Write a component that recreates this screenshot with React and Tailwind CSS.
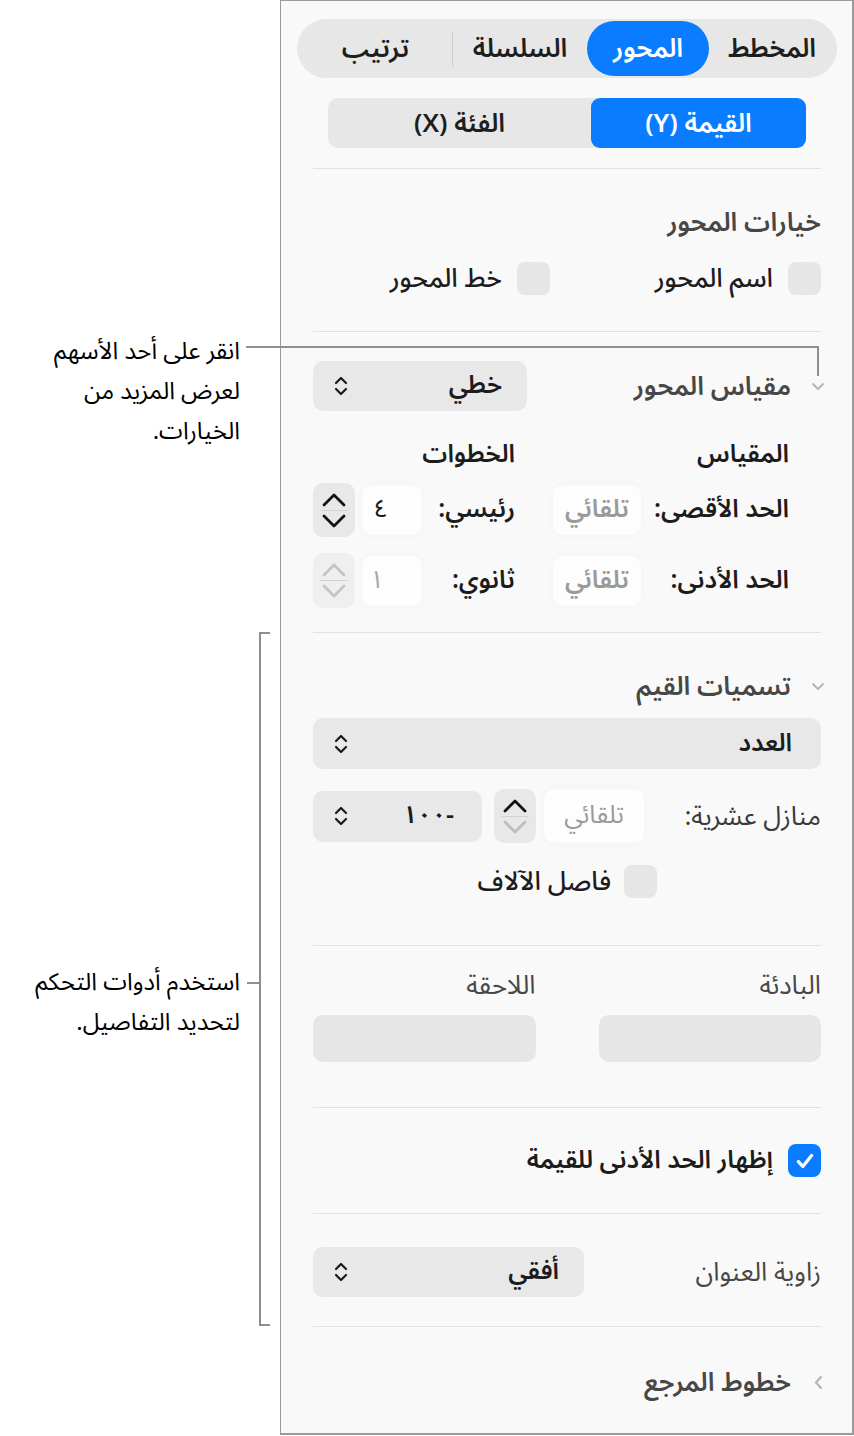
import React from 'react';

const AR = "font-['Noto_Sans_Arabic','DejaVu_Sans',sans-serif]";

const UpDown = () => (
  <svg width="16" height="22" viewBox="0 0 16 22" fill="none" stroke="#1a1a1a" strokeWidth="2.2" strokeLinecap="round" strokeLinejoin="round">
    <path d="M3 8l5-5 5 5" />
    <path d="M3 14l5 5 5-5" />
  </svg>
);

const Chev = ({ dir, color }) => (
  <svg width="26" height="15" viewBox="0 0 26 15" fill="none" stroke={color} strokeWidth="2.8" strokeLinecap="round" strokeLinejoin="round">
    {dir === 'up' ? <path d="M3 13l10-10 10 10" /> : <path d="M3 2l10 10 10-10" />}
  </svg>
);

const Stepper = ({ up = '#111', down = '#111', bg = 'bg-[#e8e8e8]', h = 'h-[54px]' }) => (
  <div className={`flex w-[42px] shrink-0 flex-col items-center justify-center rounded-[10px] ${bg} ${h}`}>
    <Chev dir="up" color={up} />
    <div className="my-[3px] h-px w-[28px] bg-[#d2d2d2]" />
    <Chev dir="down" color={down} />
  </div>
);

const Select = ({ label, className = '', textPr = 'pr-[25px]' }) => (
  <div className={`flex items-center justify-between rounded-[10px] bg-[#e8e8e8] pl-[20px] ${textPr} ${className}`}>
    <span className="text-[25px] font-semibold text-[#1c1c1c]">{label}</span>
    <UpDown />
  </div>
);

const Box = ({ checked }) =>
  checked ? (
    <div className="flex h-[33px] w-[33px] shrink-0 items-center justify-center rounded-[8px] bg-[#0a7cff]">
      <svg width="22" height="22" viewBox="0 0 20 20" fill="none" stroke="#fff" strokeWidth="3" strokeLinecap="round" strokeLinejoin="round">
        <path d="M4 10.5l4 4.5 8-10" />
      </svg>
    </div>
  ) : (
    <div className="h-[33px] w-[33px] shrink-0 rounded-[8px] bg-[#e6e6e6]" />
  );

const Field = ({ text, className = '', tone = 'text-[#9a9a9a]' }) => (
  <div className={`flex h-[50px] items-center rounded-[10px] bg-white/60 shadow-[0_0_8px_rgba(0,0,0,0.03)] ${className}`}>
    <span className={`text-[25px] ${tone}`}>{text}</span>
  </div>
);

const Divider = ({ mt }) => <div className={`h-px bg-[#e2e2e2] ${mt}`} />;

const SectionTitle = ({ text, open = true, mt }) => (
  <div className={`flex h-[30px] items-center ${mt}`}>
    <span className="-mr-[4px] ml-[20px] flex w-[14px] justify-center">
      {open ? (
        <svg width="14" height="9" viewBox="0 0 14 9" fill="none" stroke="#b4b4b4" strokeWidth="1.8" strokeLinecap="round" strokeLinejoin="round">
          <path d="M2 2l5 5 5-5" />
        </svg>
      ) : (
        <svg width="9" height="15" viewBox="0 0 9 15" fill="none" stroke="#b4b4b4" strokeWidth="2.2" strokeLinecap="round" strokeLinejoin="round">
          <path d="M7 2L2 7.5 7 13" />
        </svg>
      )}
    </span>
    <span className="text-[26px] font-semibold text-[#474747]">{text}</span>
  </div>
);

export default function App() {
  return (
    <div className={`relative flex h-[1436px] w-[854px] bg-white ${AR}`}>
      <div className="w-[280px] shrink-0" />

      <div dir="rtl" className="h-[1435px] w-[574px] border-b-2 border-l border-r-2 border-t border-[#9a9a9a] bg-[#f9f9f9] pl-[32px] pr-[31px]">
        {/* تبويبات */}
        <div className="-mx-[16px] mt-[18px] flex h-[59px] items-center rounded-full bg-[#e7e7e7] p-[2px] text-[26px] font-semibold text-[#1e1e1e]">
          <div className="flex h-full w-[126px] items-center justify-center">المخطط</div>
          <div className="flex h-full w-[122px] items-center justify-center rounded-full bg-[#0a7cff] text-white">المحور</div>
          <div className="flex h-full w-[134px] items-center justify-center">السلسلة</div>
          <div className="h-[36px] w-px bg-[#cdcdcd]" />
          <div className="flex h-full flex-1 items-center justify-center">ترتيب</div>
        </div>

        <div className="mx-[15px] mt-[20px] flex h-[50px] rounded-[10px] bg-[#e7e7e7] text-[26px] font-semibold text-[#1e1e1e]">
          <div className="flex w-[215px] items-center justify-center rounded-[9px] bg-[#0a7cff] text-white">القيمة (Y)</div>
          <div className="flex flex-1 items-center justify-center">الفئة (X)</div>
        </div>

        <Divider mt="mt-[20px]" />

        {/* خيارات المحور */}
        <div className="mt-[38px] flex h-[30px] items-center text-[26px] font-semibold text-[#474747]">خيارات المحور</div>
        <div className="mt-[25px] flex h-[33px] items-center text-[26px] font-medium text-[#1c1c1c]">
          <div className="flex w-[271px] items-center gap-[15px]">
            <Box />
            <span>اسم المحور</span>
          </div>
          <div className="flex items-center gap-[15px]">
            <Box />
            <span>خط المحور</span>
          </div>
        </div>

        <Divider mt="mt-[36px]" />

        {/* مقياس المحور */}
        <div className="mt-[29px] flex h-[50px] items-center justify-between">
          <SectionTitle text="مقياس المحور" />
          <Select label="خطي" className="h-[50px] w-[214px]" />
        </div>

        <div className="mt-[29px] flex h-[30px] items-center justify-between pr-[32px] text-[25px] font-semibold text-[#1c1c1c]">
          <span>المقياس</span>
          <span className="w-[202px]">الخطوات</span>
        </div>

        <div className="mt-[13px] flex h-[54px] items-center justify-between pr-[32px] text-[25px] font-semibold text-[#1c1c1c]">
          <div className="flex w-[236px] items-center justify-between">
            <span>الحد الأقصى:</span>
            <Field text="تلقائي" className="w-[88px] justify-center" />
          </div>
          <div className="flex w-[202px] items-center">
            <span className="flex-1">رئيسي:</span>
            <Field text="٤" tone="text-[#1c1c1c] font-normal" className="w-[60px] pr-[34px]" />
            <div className="w-[7px]" />
            <Stepper />
          </div>
        </div>

        <div className="mt-[16px] flex h-[55px] items-center justify-between pr-[32px] text-[25px] font-semibold text-[#1c1c1c]">
          <div className="flex w-[236px] items-center justify-between">
            <span>الحد الأدنى:</span>
            <Field text="تلقائي" className="w-[88px] justify-center" />
          </div>
          <div className="flex w-[202px] items-center">
            <span className="flex-1">ثانوي:</span>
            <Field text="١" tone="text-[#a8a8a8] font-normal" className="w-[60px] pr-[38px]" />
            <div className="w-[7px]" />
            <Stepper up="#c4c4c4" down="#c4c4c4" bg="bg-[#efefef]" h="h-[55px]" />
          </div>
        </div>

        <Divider mt="mt-[24px]" />

        {/* تسميات القيم */}
        <SectionTitle text="تسميات القيم" mt="mt-[38px]" />
        <Select label="العدد" className="mt-[17px] h-[51px]" textPr="pr-[29px]" />

        <div className="mt-[20px] flex h-[54px] items-center">
          <span className="flex-1 text-[26px] text-[#3a3a3a]">منازل عشرية:</span>
          <Field text="تلقائي" className="h-[54px] w-[100px] justify-center" />
          <div className="w-[8px]" />
          <Stepper down="#bdbdbd" h="h-[54px]" />
          <div className="w-[12px]" />
          <Select label="-١٠٠" className="h-[51px] w-[169px]" textPr="pr-[28px]" />
        </div>

        <div className="mt-[22px] flex h-[33px] items-center gap-[13px] pr-[164px] text-[26px] font-medium text-[#1c1c1c]">
          <Box />
          <span>فاصل الآلاف</span>
        </div>

        <Divider mt="mt-[47px]" />

        {/* البادئة واللاحقة */}
        <div className="mt-[24px] grid grid-cols-2 gap-x-[63px] text-[26px] text-[#474747]">
          <span className="flex h-[30px] items-center">البادئة</span>
          <span className="flex h-[30px] items-center">اللاحقة</span>
          <div className="mt-[15px] h-[47px] rounded-[10px] bg-[#e6e6e6]" />
          <div className="mt-[15px] h-[47px] rounded-[10px] bg-[#e6e6e6]" />
        </div>

        <Divider mt="mt-[45px]" />

        <div className="mt-[36px] flex h-[33px] items-center gap-[15px] text-[25px] font-semibold text-[#1c1c1c]">
          <Box checked />
          <span>إظهار الحد الأدنى للقيمة</span>
        </div>

        <Divider mt="mt-[36px]" />

        <div className="mt-[33px] flex h-[50px] items-center justify-between">
          <span className="text-[26px] text-[#474747]">زاوية العنوان</span>
          <Select label="أفقي" className="h-[50px] w-[271px]" />
        </div>

        <Divider mt="mt-[29px]" />

        <SectionTitle text="خطوط المرجع" open={false} mt="mt-[40px]" />
      </div>

      {/* التعليقات التوضيحية */}
      <div dir="rtl" className="absolute right-[614px] top-[332px] w-[240px] text-right text-[24px] leading-[40px] text-black">
        <p>انقر على أحد الأسهم</p>
        <p>لعرض المزيد من</p>
        <p>الخيارات.</p>
      </div>
      <div className="absolute left-[246px] top-[346px] z-10 h-[2px] w-[573px] bg-[#8e8e8e]" />
      <div className="absolute left-[817px] top-[346px] z-10 h-[30px] w-[2px] bg-[#8e8e8e]" />

      <div className="absolute left-[259px] top-[632px] h-[694px] w-[11px] border-b-2 border-l-2 border-t-2 border-[#8e8e8e]" />
      <div className="absolute left-[247px] top-[982px] h-[2px] w-[12px] bg-[#8e8e8e]" />
      <div dir="rtl" className="absolute right-[614px] top-[963px] w-[240px] text-right text-[24px] leading-[40px] text-black">
        <p>استخدم أدوات التحكم</p>
        <p>لتحديد التفاصيل.</p>
      </div>
    </div>
  );
}
